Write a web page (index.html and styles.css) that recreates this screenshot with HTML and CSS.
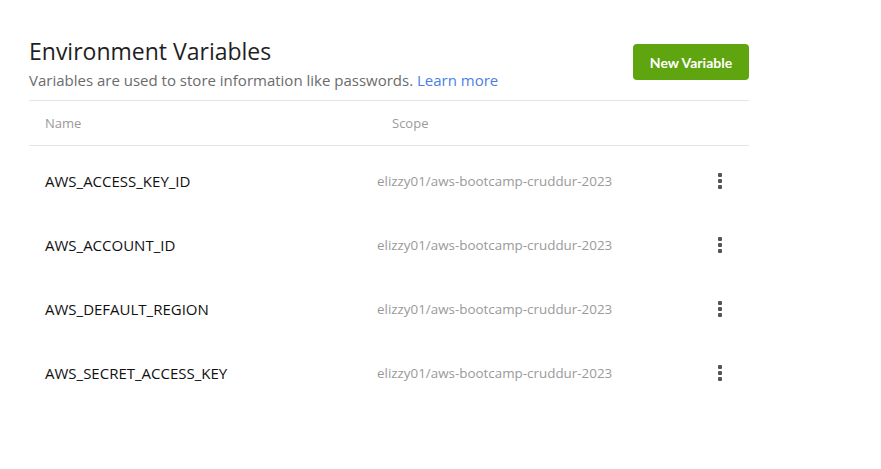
FILE: index.html
```html
<!DOCTYPE html>
<html>
<head>
<meta charset="utf-8">
<link rel="stylesheet" href="styles.css">
</head>
<body>
<div class="page">
  <div class="header">
    <div class="titles">
      <h1 class="title">Environment Variables</h1>
      <p class="subtitle">Variables are used to store information like passwords. <a class="link" href="#">Learn more</a></p>
    </div>
    <button class="btn">New Variable</button>
  </div>
  <div class="table">
    <div class="thead">
      <div class="col-name">Name</div>
      <div class="col-scope">Scope</div>
    </div>
    <div class="row">
      <div class="name">AWS_ACCESS_KEY_ID</div>
      <div class="scope">elizzy01/aws-bootcamp-cruddur-2023</div>
      <div class="menu"><span class="dot"></span><span class="dot"></span><span class="dot"></span></div>
    </div>
    <div class="row">
      <div class="name">AWS_ACCOUNT_ID</div>
      <div class="scope">elizzy01/aws-bootcamp-cruddur-2023</div>
      <div class="menu"><span class="dot"></span><span class="dot"></span><span class="dot"></span></div>
    </div>
    <div class="row">
      <div class="name">AWS_DEFAULT_REGION</div>
      <div class="scope">elizzy01/aws-bootcamp-cruddur-2023</div>
      <div class="menu"><span class="dot"></span><span class="dot"></span><span class="dot"></span></div>
    </div>
    <div class="row">
      <div class="name">AWS_SECRET_ACCESS_KEY</div>
      <div class="scope">elizzy01/aws-bootcamp-cruddur-2023</div>
      <div class="menu"><span class="dot"></span><span class="dot"></span><span class="dot"></span></div>
    </div>
  </div>
</div>
</body>
</html>
```

FILE: styles.css
```css
html, body {
  margin: 0;
  padding: 0;
  background: #ffffff;
}
body {
  font-family: "Open Sans", "Noto Sans", sans-serif;
  color: #222;
}
.page {
  width: 720px;
  margin-left: 29px;
  padding-top: 36px;
}
.header {
  display: flex;
  justify-content: space-between;
  align-items: flex-start;
  height: 64px;
}
.title {
  margin: 0;
  font-size: 23px;
  font-weight: 500;
  line-height: 30px;
  color: #1f1f1f;
}
.subtitle {
  margin: 3px 0 0;
  font-size: 15px;
  line-height: 22px;
  color: #6b6b6b;
}
.link {
  color: #4a7fe6;
  text-decoration: none;
}
.btn {
  margin-top: 8px;
  width: 116px;
  height: 36px;
  border: none;
  border-radius: 4px;
  background: #5fa50f;
  color: #fff;
  font-family: Lato, sans-serif;
  font-weight: 700;
  font-size: 14px;
  padding: 0;
}
.table {
  border-top: 1px solid #e4e4e4;
}
.thead {
  display: flex;
  align-items: center;
  height: 44px;
  border-bottom: 1px solid #e4e4e4;
  font-size: 13px;
  color: #9a9a9a;
}
.col-name {
  padding-left: 16px;
  width: 347px;
}
.row {
  display: flex;
  align-items: center;
  height: 64px;
}
.name {
  padding-left: 16px;
  width: 332px;
  font-size: 15px;
  color: #111;
}
.scope {
  flex: 1;
  font-size: 13.4px;
  color: #9a9a9a;
}
.menu {
  width: 4px;
  margin-right: 27px;
  display: flex;
  flex-direction: column;
  gap: 2px;
}
.dot {
  width: 4px;
  height: 4px;
  border-radius: 1px;
  background: #555;
}
.table .thead + .row {
  margin-top: 3px;
}
```
